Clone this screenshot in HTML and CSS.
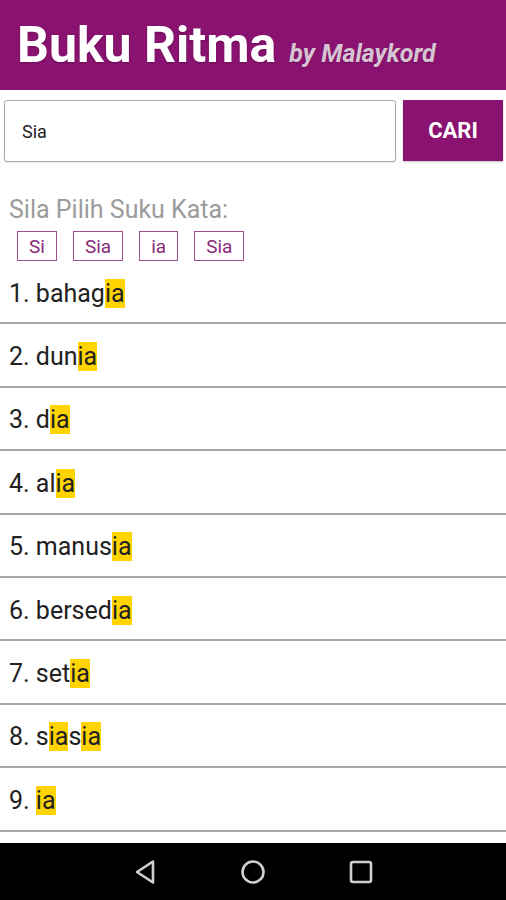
FILE: index.html
```html
<!DOCTYPE html>
<html lang="ms">
<head>
<meta charset="utf-8">
<title>Buku Ritma</title>
<link rel="stylesheet" href="styles.css">
</head>
<body>
<div class="app">
  <header class="appbar">
    <span class="title">Buku Ritma</span>
    <span class="byline">by Malaykord</span>
  </header>
  <main class="content">
    <div class="search">
      <div class="input">Sia</div>
      <button class="btn">CARI</button>
    </div>
    <div class="label">Sila Pilih Suku Kata:</div>
    <div class="chips">
      <span class="chip">Si</span>
      <span class="chip">Sia</span>
      <span class="chip">ia</span>
      <span class="chip">Sia</span>
    </div>
    <ul class="list">
      <li class="row">1. bahag<span class="hl">ia</span></li>
      <li class="row">2. dun<span class="hl">ia</span></li>
      <li class="row">3. d<span class="hl">ia</span></li>
      <li class="row">4. al<span class="hl">ia</span></li>
      <li class="row">5. manus<span class="hl">ia</span></li>
      <li class="row">6. bersed<span class="hl">ia</span></li>
      <li class="row">7. set<span class="hl">ia</span></li>
      <li class="row">8. s<span class="hl">ia</span>s<span class="hl">ia</span></li>
      <li class="row">9. <span class="hl">ia</span></li>
    </ul>
  </main>
  <nav class="navbar">
    <svg class="nav-icon" width="26" height="26" viewBox="0 0 26 26"><path d="M21 2.5 L5 13 L21 23.5 Z" fill="none" stroke="#cfcfcf" stroke-width="2.6" stroke-linejoin="round"/></svg>
    <svg class="nav-icon" width="26" height="26" viewBox="0 0 26 26"><circle cx="13" cy="13" r="10.5" fill="none" stroke="#cfcfcf" stroke-width="2.6"/></svg>
    <svg class="nav-icon" width="26" height="26" viewBox="0 0 26 26"><rect x="3" y="3" width="20" height="20" rx="2" fill="none" stroke="#cfcfcf" stroke-width="2.6"/></svg>
  </nav>
</div>
</body>
</html>
```
FILE: styles.css
```css
* { box-sizing: border-box; }
html, body { margin: 0; padding: 0; }
body {
  font-family: Roboto, "Liberation Sans", Arial, sans-serif;
  background: #fff;
  color: #222;
}
.app {
  height: 100vh;
  display: flex;
  flex-direction: column;
  overflow: hidden;
}
.appbar {
  height: 90px;
  flex: 0 0 auto;
  background: #8a1270;
  display: flex;
  align-items: baseline;
  padding: 20px 0 0 17px;
}
.title {
  font-size: 50px;
  line-height: 50px;
  font-weight: 700;
  color: #fff;
  text-shadow: 0 1px 2px rgba(0,0,0,0.25);
}
.byline {
  margin-left: 13px;
  font-size: 25px;
  font-weight: 700;
  font-style: italic;
  color: #d6c4d2;
  text-shadow: 0 1px 1px rgba(0,0,0,0.2);
}
.content {
  flex: 1 1 auto;
  overflow: hidden;
  display: flex;
  flex-direction: column;
}
.search {
  display: flex;
  gap: 7px;
  margin-top: 10px;
  padding: 0 3px 0 4px;
  align-items: flex-start;
}
.input {
  flex: 1 1 auto;
  height: 62px;
  border: 1.5px solid #a9a9a9;
  border-radius: 3px;
  padding-left: 17px;
  display: flex;
  align-items: center;
  font-size: 18px;
  color: #222;
  box-shadow: 0 1px 1px rgba(0,0,0,0.08);
}
.btn {
  flex: 0 0 100px;
  height: 61px;
  border: none;
  background: #8a1270;
  color: #fff;
  font-family: Roboto, "Liberation Sans", Arial, sans-serif;
  font-size: 22px;
  font-weight: 700;
  padding: 0;
  box-shadow: 0 1px 2px rgba(0,0,0,0.25);
}
.label {
  margin-top: 35px;
  padding-left: 9px;
  font-size: 25px;
  line-height: 26px;
  color: #9b9b9b;
}
.chips {
  display: flex;
  gap: 16px;
  margin-top: 8px;
  padding-left: 17px;
}
.chip {
  height: 30px;
  padding: 0 11px;
  border: 1.5px solid #9c4f8c;
  color: #8a2a78;
  font-size: 19px;
  display: flex;
  align-items: center;
}
.list {
  list-style: none;
  margin: 0;
  padding: 0;
}
.row {
  height: 63.4px;
  border-bottom: 2px solid #a6a6a6;
  display: flex;
  align-items: center;
  padding: 3px 0 0 9px;
  font-size: 25px;
  color: #222;
  white-space: pre;
}
.hl {
  background: #ffd400;
}
.navbar {
  flex: 0 0 57px;
  background: #000;
  display: flex;
  align-items: center;
  justify-content: center;
  gap: 82px;
}
.nav-icon { display: block; }
```
